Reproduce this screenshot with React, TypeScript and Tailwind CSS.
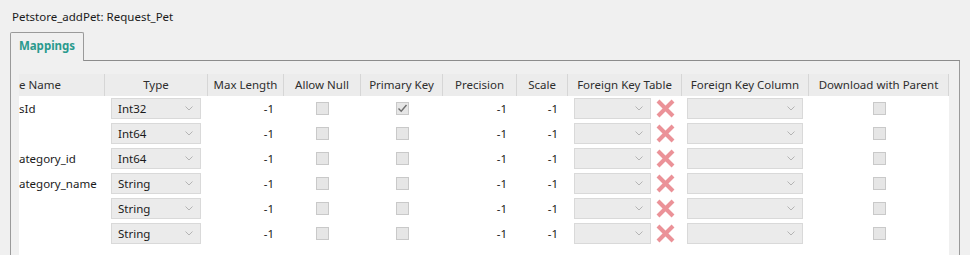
import React from 'react';

type Row = {
  name: string;
  type: string;
  pk?: boolean;
};

// the name column is scrolled a little to the right, so only the tail of each name shows
const rows: Row[] = [
  { name: 'sId', type: 'Int32', pk: true },
  { name: '', type: 'Int64' },
  { name: 'ategory_id', type: 'Int64' },
  { name: 'ategory_name', type: 'String' },
  { name: '', type: 'String' },
  { name: '', type: 'String' },
];

function Chevron() {
  return (
    <svg width="8" height="5" viewBox="0 0 8 5" className="shrink-0">
      <path d="M0.5 0.5 L4 4 L7.5 0.5" fill="none" stroke="#b4b4b4" strokeWidth="1" />
    </svg>
  );
}

function Combo({ width, value }: { width: string; value?: string }) {
  return (
    <div className={`${width} flex h-[21px] items-center justify-between border border-[#d9d9d9] bg-[#ebebeb] pl-[6px] pr-[7px] text-[#1a1a1a]`}>
      <span>{value}</span>
      <Chevron />
    </div>
  );
}

function Check({ checked }: { checked?: boolean }) {
  return (
    <div className="flex h-[13px] w-[13px] items-center justify-center border border-[#c9c9c9] bg-[#e6e6e6]">
      {checked && (
        <svg width="11" height="11" viewBox="0 0 11 11">
          <path d="M1.5 5.5 L4.2 8.2 L9.5 2" fill="none" stroke="#6e6e6e" strokeWidth="1.4" />
        </svg>
      )}
    </div>
  );
}

function RemoveIcon() {
  return (
    <svg width="19" height="19" viewBox="0 0 19 19" className="shrink-0">
      <g stroke="#e0505a" strokeWidth="4" opacity="0.62">
        <line x1="2" y1="2" x2="17" y2="17" />
        <line x1="17" y1="2" x2="2" y2="17" />
      </g>
    </svg>
  );
}

const cols = [
  { label: 'e Name', w: 'w-[86px]' },
  { label: 'Type', w: 'w-[103px]' },
  { label: 'Max Length', w: 'w-[76px]' },
  { label: 'Allow Null', w: 'w-[77px]' },
  { label: 'Primary Key', w: 'w-[82px]' },
  { label: 'Precision', w: 'w-[74px]' },
  { label: 'Scale', w: 'w-[51px]' },
  { label: 'Foreign Key Table', w: 'w-[114px]' },
  { label: 'Foreign Key Column', w: 'w-[127px]' },
  { label: 'Download with Parent', w: 'w-[140px]' },
];

export default function App() {
  return (
    <div className="flex h-[255px] w-[970px] flex-col overflow-hidden bg-[#f0f0f0] font-['Noto_Sans',sans-serif] text-[11.5px] text-[#1a1a1a]">
      <div className="h-[32px] pl-[12px] pt-[8px] leading-[17px]">Petstore_addPet: Request_Pet</div>

      <div className="flex h-[29px] pl-[10px] pr-[10px]">
        <div className="flex w-[74px] items-center justify-center rounded-t-[2px] border border-b-0 border-[#9a9a9a] pb-[2px] font-bold text-[#2a9a8e]">
          Mappings
        </div>
        <div className="flex-1 border-b border-[#8c8c8c]" />
      </div>

      <div className="mx-[10px] flex-1 border-l border-r border-[#9a9a9a] pl-[8px] pr-[10px] pt-[13px]">
        <div className="flex h-full flex-col bg-white">
          <div className="flex h-[22px] bg-[#ececec] text-[#2e2e2e]">
            {cols.map((c, i) => (
              <div
                key={c.label}
                className={`${c.w} flex shrink-0 items-center whitespace-nowrap border-r border-[#d6d6d6] ${i === 0 ? '' : 'justify-center'}`}
              >
                {c.label}
              </div>
            ))}
          </div>

          {rows.map((r, i) => (
            <div key={i} className="flex h-[25px] items-center">
              <div className="w-[86px] shrink-0 whitespace-nowrap">{r.name}</div>
              <div className="flex w-[103px] shrink-0 pl-[6px]">
                <Combo width="w-[90px]" value={r.type} />
              </div>
              <div className="w-[76px] shrink-0 pr-[10px] text-right">-1</div>
              <div className="flex w-[77px] shrink-0 justify-center">
                <Check />
              </div>
              <div className="flex w-[82px] shrink-0 justify-center">
                <Check checked={r.pk} />
              </div>
              <div className="w-[74px] shrink-0 pr-[10px] text-right">-1</div>
              <div className="w-[51px] shrink-0 pr-[10px] text-right">-1</div>
              <div className="flex w-[114px] shrink-0 items-center gap-[5px] pl-[6px]">
                <Combo width="w-[77px]" />
                <RemoveIcon />
              </div>
              <div className="flex w-[127px] shrink-0 pl-[5px]">
                <Combo width="w-[116px]" />
              </div>
              <div className="flex w-[140px] shrink-0 justify-center">
                <Check />
              </div>
            </div>
          ))}
        </div>
      </div>
    </div>
  );
}
